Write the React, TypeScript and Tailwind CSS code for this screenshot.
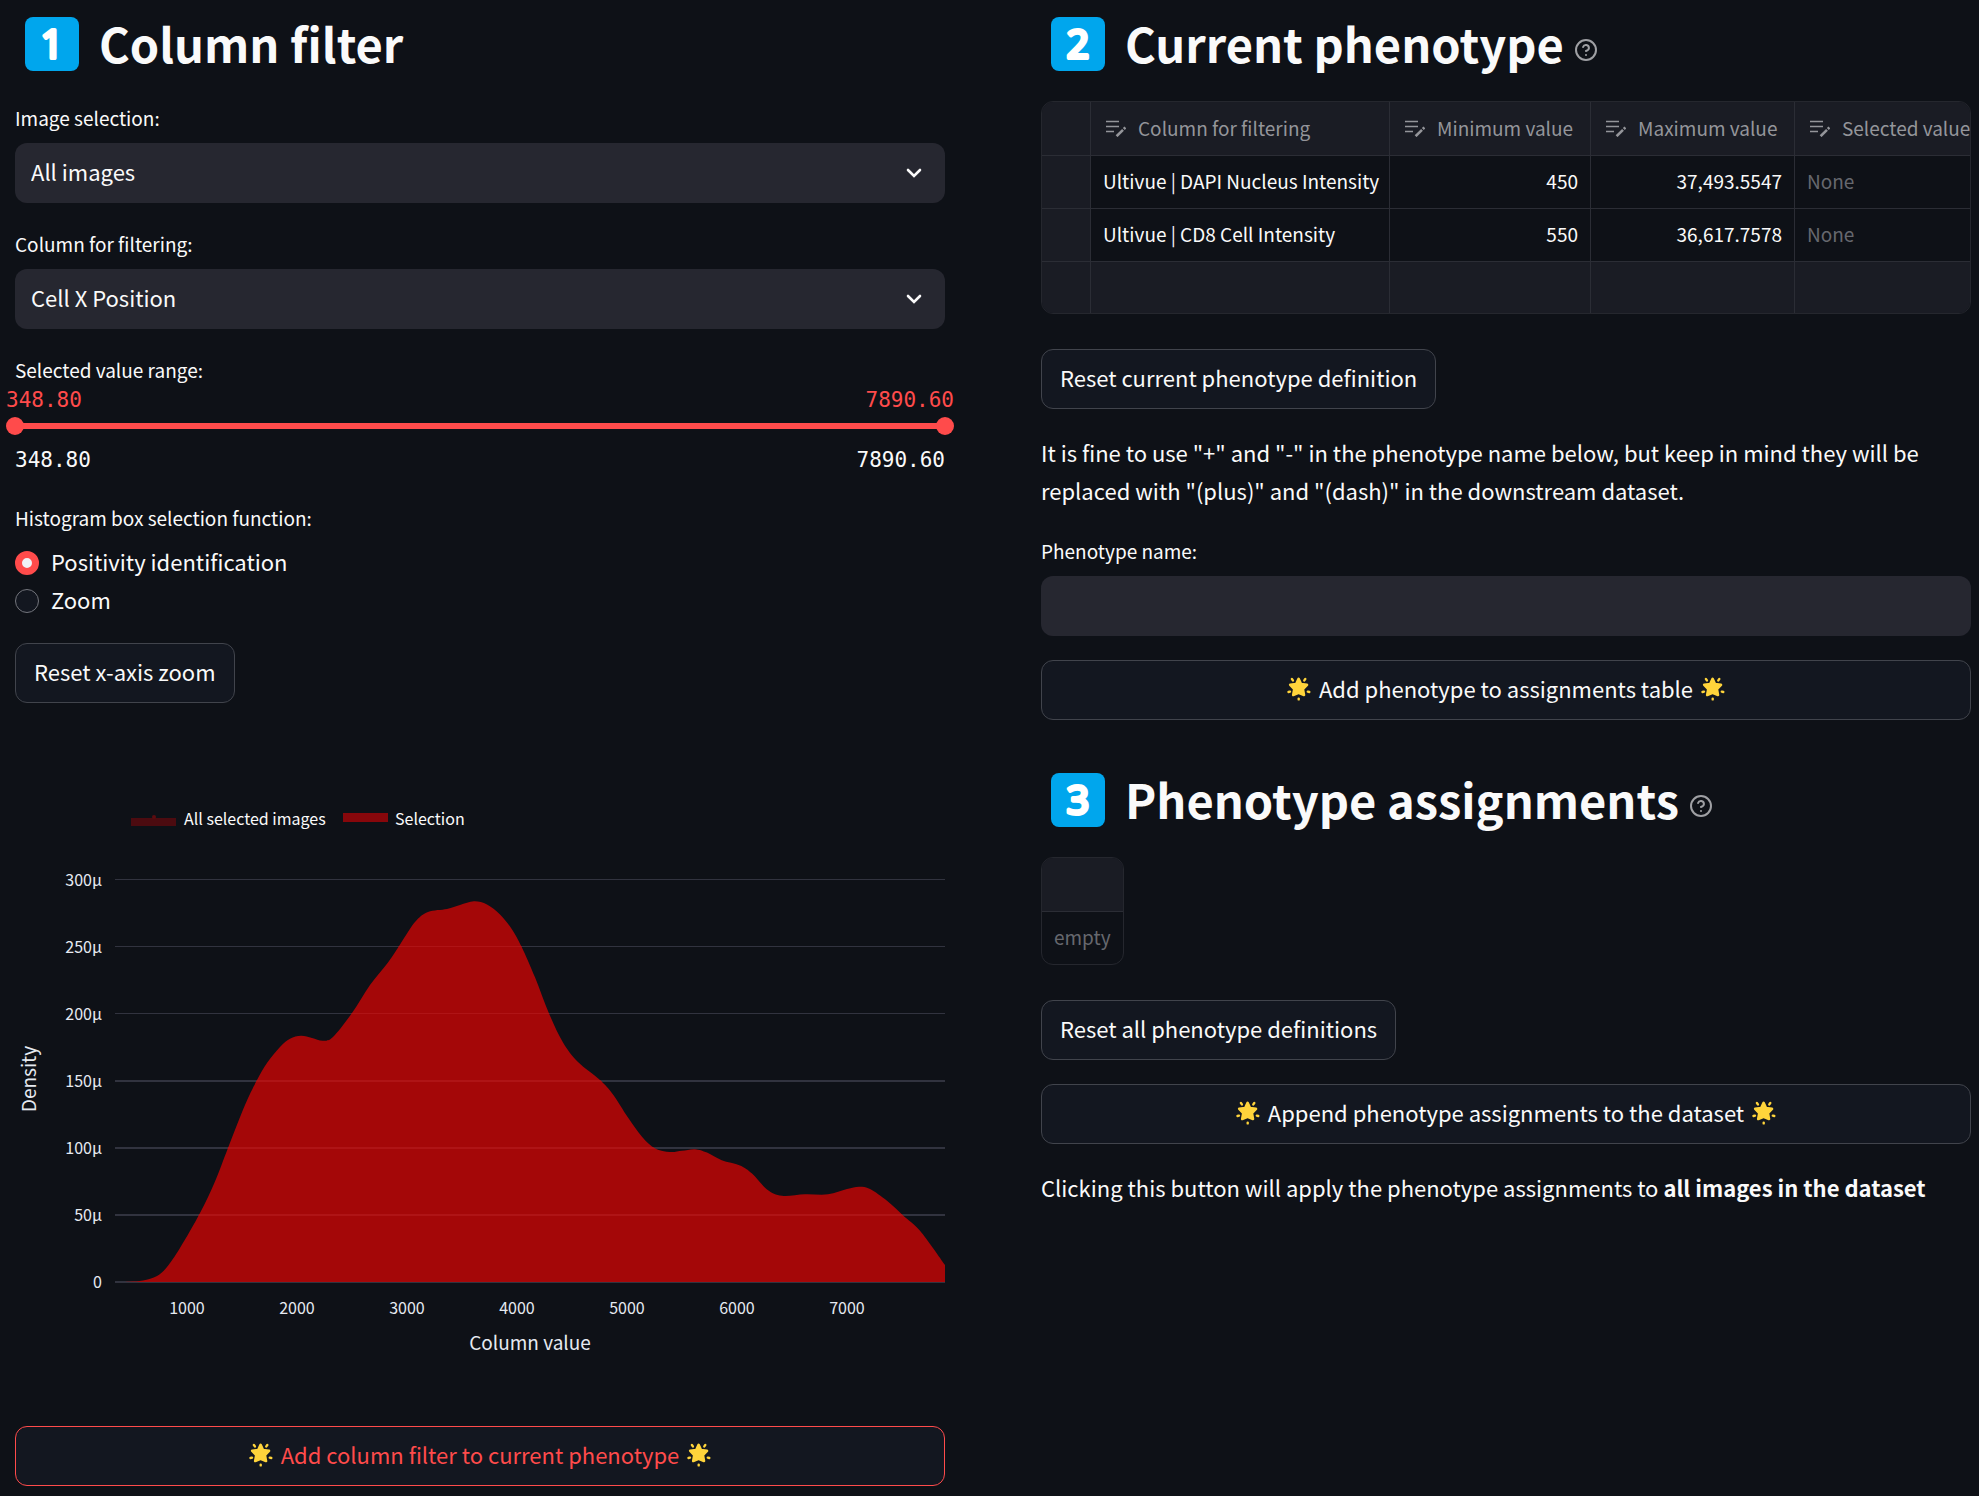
import { useState, type ReactNode } from "react";
import { HelpCircle } from "lucide-react";

type Point = [number, number];

const DENSITY: Point[] = [
  [100, 555], [114, 554.8], [128, 553.6], [142, 549], [152, 540], [165, 521], [185, 486],
  [200, 454.5], [213, 421], [230, 378], [242, 353], [252, 336], [265, 320],
  [275, 311.7], [286, 308.7], [297, 311], [308, 313.7], [318, 310], [337, 286], [355, 258],
  [373, 235.5], [386, 216], [400, 195], [413, 185], [432, 182], [445, 178], [459, 174.3],
  [472, 177.4], [485, 187.5], [496.7, 202], [506.7, 220], [520, 250.3], [534, 286.4], [548, 315.5],
  [563, 335], [585, 353], [598, 367.5], [613, 390.6], [627, 409.7], [640, 421.4], [655, 425],
  [667, 423.8], [680, 422.2], [692, 425.6], [706.7, 433.3], [725, 438.5], [737, 446.6], [752, 462.4],
  [767, 468.8], [790, 467.3], [813, 467.3], [832, 462], [844, 459.7], [855, 462], [872, 473.8],
  [888, 488.4], [905, 503.8], [930, 538],
];

// Catmull-Rom interpolation through the sampled density values.
function curve(points: Point[]): string {
  let d = `M${points[0][0]} ${points[0][1]}`;
  for (let i = 0; i < points.length - 1; i++) {
    const p0 = points[Math.max(i - 1, 0)];
    const p1 = points[i];
    const p2 = points[i + 1];
    const p3 = points[Math.min(i + 2, points.length - 1)];
    d += `C${p1[0] + (p2[0] - p0[0]) / 6} ${p1[1] + (p2[1] - p0[1]) / 6} ${p2[0] - (p3[0] - p1[0]) / 6} ${p2[1] - (p3[1] - p1[1]) / 6} ${p2[0]} ${p2[1]}`;
  }
  return `${d}V555H100Z`;
}

const Y_TICKS = [
  { label: "300µ", y: 152, h: 1 },
  { label: "250µ", y: 219, h: 1 },
  { label: "200µ", y: 286, h: 1 },
  { label: "150µ", y: 353, h: 2 },
  { label: "100µ", y: 420, h: 2 },
  { label: "50µ", y: 487, h: 2 },
  { label: "0", y: 554, h: 2 },
];
const X_TICKS = [1000, 2000, 3000, 4000, 5000, 6000, 7000];

function DensityChart() {
  return (
    <svg viewBox="0 0 930 675" className="block h-auto w-full" role="img" aria-label="Density by column value">
      <rect x="116" y="91" width="45" height="8" fill="#4c0b10" />
      <circle cx="139" cy="90" r="2" fill="#5c0c10" />
      <text x="169" y="98" fontSize="16" fill="#fafafa">All selected images</text>
      <rect x="328" y="86" width="45" height="9" fill="#87070b" />
      <text x="380" y="98" fontSize="16" fill="#fafafa">Selection</text>
      {Y_TICKS.map((t) => (
        <g key={t.label}>
          <rect x="100" y={t.y} width="830" height={t.h} fill="#31333f" />
          <text x="87" y={t.y + 7} fontSize="16" fill="#e6eaf1" textAnchor="end">{t.label}</text>
        </g>
      ))}
      <path d={curve(DENSITY)} fill="#ae0607" fillOpacity="0.94" />
      {Y_TICKS.slice(1, 6).map((t) => (
        <clipPath key={t.label} id={`tick${t.y}`}>
          <rect x="100" y={t.y} width="830" height={t.h} />
        </clipPath>
      ))}
      {Y_TICKS.slice(1, 6).map((t) => (
        <path key={t.label} d={curve(DENSITY)} clipPath={`url(#tick${t.y})`} fill="#af1416" />
      ))}
      {X_TICKS.map((t, i) => (
        <text key={t} x={172 + i * 110} y="587" fontSize="16" fill="#e6eaf1" textAnchor="middle">{t}</text>
      ))}
      <text x="515" y="623" fontSize="19" fill="#e6eaf1" textAnchor="middle">Column value</text>
      <text transform="translate(21 352) rotate(-90)" fontSize="19" fill="#e6eaf1" textAnchor="middle">Density</text>
    </svg>
  );
}

function Keycap({ digit }: { digit: string }) {
  return (
    <svg viewBox="0 0 54 54" className="size-[54px] shrink-0">
      <rect width="54" height="54" rx="8" fill="#00a6ed" />
      <text
        x="27"
        y="41"
        fontSize="39"
        fontFamily="Open Sans, sans-serif"
        fontWeight="400"
        fill="#fff"
        stroke="#fff"
        strokeWidth="4"
        strokeLinejoin="round"
        textAnchor="middle"
      >
        {digit}
      </text>
    </svg>
  );
}

function Star() {
  return (
    <svg viewBox="0 0 24 24" className="size-6 shrink-0" aria-hidden="true">
      <path
        d="M11.6 1.9 14 7.1 20 7.8 15.9 12 17 18 11.6 15.8 6.2 18 7.3 12 3.2 7.8 9.2 7.1Z"
        fill="#ffd43b"
        stroke="#ffd43b"
        strokeWidth="2.6"
        strokeLinejoin="round"
      />
      <g stroke="#ffd43b" strokeLinecap="round" strokeWidth="2.4">
        <path d="M4.9 2 5.9 3.4M18.3 2 17.3 3.4M1.5 15 3 14.6M22.3 15 20.8 14.6M11.7 21.6V22.4" />
      </g>
    </svg>
  );
}

function Chevron() {
  return (
    <svg viewBox="0 0 16 10" className="pointer-events-none absolute top-1/2 right-[23px] h-[10px] w-4 -translate-y-1/2" aria-hidden="true">
      <path d="M2 2 8 8 14 2" fill="none" stroke="#fafafa" strokeWidth="2.6" strokeLinecap="round" />
    </svg>
  );
}

function EditIcon() {
  return (
    <svg viewBox="0 0 20 17" className="h-[17px] w-5 shrink-0" fill="none" stroke="#94959a" aria-hidden="true">
      <path d="M0 1.5H13M0 6.5H13M0 11.5H8" strokeWidth="1.4" />
      <path d="M10.6 16.2 17 9.8M17.8 9 19.4 7.4" strokeWidth="2.6" />
    </svg>
  );
}

function Heading({ digit, help, children }: { digit: string; help?: string; children: ReactNode }) {
  return (
    <div className="flex h-[54px] items-center pl-[10px]">
      <Keycap digit={digit} />
      <h2 className="ml-5 pb-[2px] text-[47px] leading-[54px] font-bold whitespace-nowrap">{children}</h2>
      {help && (
        <button type="button" aria-label={help} className="mt-3 ml-[10px] text-[#9fa0a4]">
          <HelpCircle className="size-6" />
        </button>
      )}
    </div>
  );
}

function SelectField({ id, label, options }: { id: string; label: string; options: string[] }) {
  return (
    <div>
      <label htmlFor={id} className="mb-[10px] block text-[19px] leading-[30px]">{label}</label>
      <div className="relative">
        <select id={id} className="h-[60px] w-full appearance-none rounded-xl bg-[#262730] px-4 pb-[3px] text-[22px] outline-none">
          {options.map((o) => (
            <option key={o}>{o}</option>
          ))}
        </select>
        <Chevron />
      </div>
    </div>
  );
}

function Button({ wide, accent, children }: { wide?: boolean; accent?: boolean; children: ReactNode }) {
  return (
    <button
      type="button"
      className={`flex h-[60px] items-center justify-center gap-2 rounded-xl border bg-[#131720] px-[18px] pb-[3px] text-[22px] whitespace-nowrap ${
        wide ? "w-full" : "self-start"
      } ${accent ? "border-[#ff4b4b] text-[#ff4b4b]" : "border-[#41444c]"}`}
    >
      {children}
    </button>
  );
}

const MIN = 348.8;
const MAX = 7890.6;
const MONO = "font-['DejaVu_Sans_Mono',monospace]";
const RANGE =
  "pointer-events-none absolute -inset-x-[9px] top-0 h-[18px] w-[calc(100%+18px)] appearance-none bg-transparent outline-none [&::-webkit-slider-thumb]:pointer-events-auto [&::-webkit-slider-thumb]:size-[18px] [&::-webkit-slider-thumb]:appearance-none [&::-webkit-slider-thumb]:rounded-full [&::-webkit-slider-thumb]:bg-[#ff4b4b]";

function RangeSlider() {
  const [low, setLow] = useState(MIN);
  const [high, setHigh] = useState(MAX);
  const at = (v: number) => ((v - MIN) / (MAX - MIN)) * 100;
  return (
    <fieldset>
      <legend className="text-[19px] leading-[30px]">Selected value range:</legend>
      <div className={`-mx-[9px] flex justify-between pb-[2px] text-[21px] leading-[30px] text-[#ff4b4b] ${MONO}`}>
        <output>{low.toFixed(2)}</output>
        <output>{high.toFixed(2)}</output>
      </div>
      <div className="relative flex h-[18px] items-center">
        <div className="h-[6px] w-full bg-[#31333f]">
          <div className="h-full bg-[#ff4b4b]" style={{ marginLeft: `${at(low)}%`, width: `${at(high) - at(low)}%` }} />
        </div>
        <input type="range" aria-label="Minimum" min={MIN} max={MAX} step="0.1" value={low} onChange={(e) => setLow(Math.min(+e.target.value, high))} className={RANGE} />
        <input type="range" aria-label="Maximum" min={MIN} max={MAX} step="0.1" value={high} onChange={(e) => setHigh(Math.max(+e.target.value, low))} className={RANGE} />
      </div>
      <div className={`mt-[10px] flex justify-between text-[21px] leading-[30px] ${MONO}`}>
        <span>348.80</span>
        <span>7890.60</span>
      </div>
    </fieldset>
  );
}

function Radio({ label, defaultChecked }: { label: string; defaultChecked?: boolean }) {
  return (
    <label className="flex h-[38px] items-center gap-3 text-[22px]">
      <input
        type="radio"
        name="box-function"
        defaultChecked={defaultChecked}
        className="size-6 appearance-none rounded-full border border-[#73757c] bg-[#131720] checked:border-[7px] checked:border-[#ff4b4b] checked:bg-[#f0f2f6]"
      />
      <span className="pb-[3px]">{label}</span>
    </label>
  );
}

const ROWS = [
  ["Ultivue | DAPI Nucleus Intensity", "450", "37,493.5547"],
  ["Ultivue | CD8 Cell Intensity", "550", "36,617.7578"],
];

function PhenotypeTable() {
  const cell = "border-r border-b border-[#2b2d35] px-3 pb-[2px] whitespace-nowrap";
  return (
    <div className="overflow-hidden rounded-xl border border-[#25272e]">
      <table className="w-[954px] table-fixed border-separate border-spacing-0 text-[19px]">
        <colgroup>
          <col className="w-[49px]" />
          <col className="w-[299px]" />
          <col className="w-[201px]" />
          <col className="w-[204px]" />
          <col className="w-[201px]" />
        </colgroup>
        <thead>
          <tr className="h-[54px] bg-[#1a1c24] text-[#94959a]">
            <td className={cell} />
            {["Column for filtering", "Minimum value", "Maximum value", "Selected values"].map((h) => (
              <th key={h} scope="col" className="border-r border-b border-[#2b2d35] pl-[15px] text-left font-normal whitespace-nowrap">
                <span className="flex items-center gap-3">
                  <EditIcon />
                  {h}
                </span>
              </th>
            ))}
          </tr>
        </thead>
        <tbody>
          {ROWS.map(([name, min, max]) => (
            <tr key={name} className="h-[53px]">
              <td className={`${cell} bg-[#1a1c24]`} />
              <td className={cell}>{name}</td>
              <td className={`${cell} text-right`}>{min}</td>
              <td className={`${cell} text-right`}>{max}</td>
              <td className={`${cell} text-[#66686e]`}>None</td>
            </tr>
          ))}
          <tr className="h-[51px] bg-[#1a1c24]">
            {[0, 1, 2, 3, 4].map((i) => (
              <td key={i} className="border-r border-[#2b2d35]" />
            ))}
          </tr>
        </tbody>
      </table>
    </div>
  );
}

export default function App() {
  return (
    <main className="grid min-h-screen grid-cols-2 content-start gap-x-24 bg-[#0e1117] pt-[17px] pr-2 pb-[10px] pl-[15px] font-['Noto_Sans_CJK_SC',sans-serif] text-[#fafafa]">
      <section className="flex min-w-0 flex-col">
        <Heading digit="1">Column filter</Heading>
        <div className="mt-8 flex flex-col gap-[26px]">
          <SelectField id="image" label="Image selection:" options={["All images"]} />
          <SelectField id="column" label="Column for filtering:" options={["Cell X Position"]} />
          <RangeSlider />
        </div>
        <fieldset className="mt-7">
          <legend className="mb-[11px] text-[19px] leading-[30px]">Histogram box selection function:</legend>
          <Radio label="Positivity identification" defaultChecked />
          <Radio label="Zoom" />
        </fieldset>
        <div className="mt-[23px] flex flex-col gap-6">
          <Button>Reset x-axis zoom</Button>
          <DensityChart />
          <Button wide accent>
            <Star />
            Add column filter to current phenotype
            <Star />
          </Button>
        </div>
      </section>

      <section className="flex min-w-0 flex-col">
        <Heading digit="2" help="Help: current phenotype">Current phenotype</Heading>
        <div className="mt-[30px] flex flex-col">
          <PhenotypeTable />
          <div className="mt-[35px] flex flex-col gap-6">
            <Button>Reset current phenotype definition</Button>
            <p className="pb-[3px] text-[22px] leading-[38px]">
              It is fine to use "+" and "-" in the phenotype name below, but keep in mind they will be replaced with
              "(plus)" and "(dash)" in the downstream dataset.
            </p>
            <div>
              <label htmlFor="name" className="mb-[10px] block text-[19px] leading-[30px]">Phenotype name:</label>
              <input id="name" type="text" className="block h-[60px] w-full rounded-xl bg-[#262730] px-4 text-[22px] outline-none" />
            </div>
            <Button wide>
              <Star />
              Add phenotype to assignments table
              <Star />
            </Button>
          </div>
        </div>
        <div className="mt-[53px]">
          <Heading digit="3" help="Help: phenotype assignments">Phenotype assignments</Heading>
        </div>
        <div className="mt-[30px] self-start overflow-hidden rounded-xl border border-[#25272e]">
          <table className="border-separate border-spacing-0 text-[19px]">
            <thead>
              <tr className="h-[54px] bg-[#1a1c24]">
                <td className="border-b border-[#2b2d35]" />
              </tr>
            </thead>
            <tbody>
              <tr className="h-[52px]">
                <td className="px-3 pb-[2px] text-[#66686e]">empty</td>
              </tr>
            </tbody>
          </table>
        </div>
        <div className="mt-[35px] flex flex-col gap-6">
          <Button>Reset all phenotype definitions</Button>
          <Button wide>
            <Star />
            Append phenotype assignments to the dataset
            <Star />
          </Button>
          <p className="text-[22px] leading-[38px]">
            Clicking this button will apply the phenotype assignments to <strong className="font-bold">all images in the dataset</strong>
          </p>
        </div>
      </section>
    </main>
  );
}
